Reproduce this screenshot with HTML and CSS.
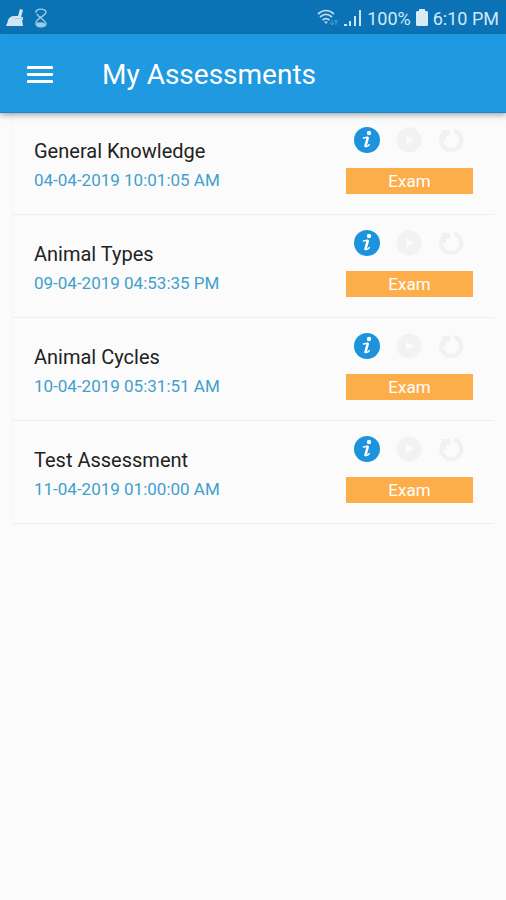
FILE: index.html
```
<!DOCTYPE html>
<html lang="en">
<head>
  <meta charset="UTF-8">
  <meta name="viewport" content="width=device-width, initial-scale=1.0">
  <title>My Assessments</title>
  <link rel="stylesheet" href="styles.css">
</head>
<body>
  <!-- shared icons -->
  <svg class="sprite" aria-hidden="true">
    <symbol id="icon-info" viewBox="0 0 26 26">
      <circle cx="13" cy="13" r="13" fill="#1c93dc"/>
      <circle cx="15" cy="6" r="2.200" fill="#fff"/>
      <path d="M9.500 11l4-.8M11.500 19.500c1.500.2 2.700-.5 3.700-1.800" fill="none" stroke="#fff" stroke-width="1.500" stroke-linecap="round"/>
      <path d="M13.700 11l-2.200 8" fill="none" stroke="#fff" stroke-width="2.600" stroke-linecap="round"/>
    </symbol>
    <symbol id="icon-play" viewBox="0 0 26 26">
      <circle cx="13" cy="13" r="12.500" fill="#f2f2f2"/>
      <path d="M10 8.500l8 4.500-8 4.500z" fill="#fbfbfb"/>
    </symbol>
    <symbol id="icon-reset" viewBox="0 0 26 26">
      <path d="M8 4.500a10 10 0 1 0 8-1" fill="none" stroke="#f1f1f1" stroke-width="4"/>
      <path d="M4 3h8v6H8v4H4z" fill="#f1f1f1"/>
    </symbol>
  </svg>

  <div class="status-bar">
    <div class="status-left">
      <svg width="18" height="18" viewBox="0 0 18 18"><path d="M0 17c0-2 2-3 2-6 1-2 3-4 6-4h4l2-7 3 1-2 7h2v3h-1l1 6z" fill="#cfe6f4"/><path d="M8 9.500h9" stroke="#a5cde6" fill="none"/></svg>
      <svg width="14" height="20" viewBox="0 0 14 20"><path d="M2 5c-1-5 10-5 10-1 0 4-10 6-10 11 0 5 10 5 10 1 0-4-8-7-9-10" fill="none" stroke="#9fcbe6" stroke-width="1.400"/><ellipse cx="6.500" cy="16.500" rx="4.500" ry="2.200" fill="#9fcbe6"/></svg>
    </div>
    <div class="status-right">
      <svg width="22" height="18" viewBox="0 0 22 18"><path d="M1 5c5-4.500 11-4.500 16 0M3 8c4-3.500 8-3.500 12 0M5.500 11c2.500-2 4.500-2 7 0" fill="none" stroke="#bcdcf0" stroke-width="1.700"/><path d="M9 15l-2-2.500h4z" fill="#bcdcf0"/><path d="M15 11v5M13 14l2 2 2-2M19 16v-5M17.500 13l1.500-2 1.500 2" fill="none" stroke="#4b9fd0"/></svg>
      <svg width="18" height="18" viewBox="0 0 18 18" fill="#cfe6f4"><path d="M0 15h3v2H0zM5 12h2v5H5zM10 7h2v10h-2zM15 1h2v16h-2z"/></svg>
      <span>100%</span>
      <svg width="12" height="18" viewBox="0 0 12 18"><path d="M3 0h6v2h2l1 1v13l-1 1H1l-1-1V3l1-1h2z" fill="#d8ebf7"/></svg>
      <span>6:10 PM</span>
    </div>
  </div>

  <header class="app-bar">
    <button class="menu-btn" aria-label="Menu"><span></span><span></span><span></span></button>
    <h1>My Assessments</h1>
  </header>

  <main class="list">
    <div class="item">
      <div class="info">
        <h2>General Knowledge</h2>
        <p>04-04-2019 10:01:05 AM</p>
      </div>
      <div class="actions">
        <div class="icons">
          <button aria-label="Info"><svg><use href="#icon-info"/></svg></button>
          <button aria-label="Start" disabled><svg><use href="#icon-play"/></svg></button>
          <button aria-label="Retake" disabled><svg><use href="#icon-reset"/></svg></button>
        </div>
        <span class="tag">Exam</span>
      </div>
    </div>

    <div class="item">
      <div class="info">
        <h2>Animal Types</h2>
        <p>09-04-2019 04:53:35 PM</p>
      </div>
      <div class="actions">
        <div class="icons">
          <button aria-label="Info"><svg><use href="#icon-info"/></svg></button>
          <button aria-label="Start" disabled><svg><use href="#icon-play"/></svg></button>
          <button aria-label="Retake" disabled><svg><use href="#icon-reset"/></svg></button>
        </div>
        <span class="tag">Exam</span>
      </div>
    </div>

    <div class="item">
      <div class="info">
        <h2>Animal Cycles</h2>
        <p>10-04-2019 05:31:51 AM</p>
      </div>
      <div class="actions">
        <div class="icons">
          <button aria-label="Info"><svg><use href="#icon-info"/></svg></button>
          <button aria-label="Start" disabled><svg><use href="#icon-play"/></svg></button>
          <button aria-label="Retake" disabled><svg><use href="#icon-reset"/></svg></button>
        </div>
        <span class="tag">Exam</span>
      </div>
    </div>

    <div class="item">
      <div class="info">
        <h2>Test Assessment</h2>
        <p>11-04-2019 01:00:00 AM</p>
      </div>
      <div class="actions">
        <div class="icons">
          <button aria-label="Info"><svg><use href="#icon-info"/></svg></button>
          <button aria-label="Start" disabled><svg><use href="#icon-play"/></svg></button>
          <button aria-label="Retake" disabled><svg><use href="#icon-reset"/></svg></button>
        </div>
        <span class="tag">Exam</span>
      </div>
    </div>
  </main>
</body>
</html>
```
FILE: styles.css
```
:root {
  --primary: #1f99e0;
  --primary-dark: #0b73b5;
  --accent: #fdae4b;
  --bg: #fbfbfb;
}
* { box-sizing: border-box; }
body {
  margin: 0;
  min-height: 100vh;
  background: var(--bg);
  font-family: Roboto, sans-serif;
}
h1, h2, p { margin: 0; font-weight: 400; }
button { border: none; background: none; padding: 0; cursor: pointer; }
svg { display: block; }
.sprite { display: none; }

.status-bar {
  display: flex;
  justify-content: space-between;
  align-items: center;
  height: 34px;
  padding: 2px 7px 0 6px;
  background: var(--primary-dark);
  color: #d3e8f5;
  font-size: 18px;
}
.status-left { display: flex; align-items: center; gap: 10px; }
.status-right { display: flex; align-items: center; gap: 5px; }

.app-bar {
  position: relative;
  display: flex;
  align-items: center;
  gap: 49px;
  height: 78px;
  padding: 2px 27px 0;
  background: var(--primary);
  color: #fff;
  box-shadow: 0 1px 0 #1688cb, 0 3px 6px rgba(0,0,0,0.35);
}
.app-bar h1 { padding-top: 2px; font-size: 28px; line-height: 32px; }
.menu-btn { display: flex; flex-direction: column; gap: 4px; width: 26px; }
.menu-btn span { height: 3px; background: #fff; border-radius: 1px; }

.list { margin: 0 12px; border-left: 1px solid #f5f5f5; }
.item {
  display: flex;
  justify-content: space-between;
  height: 103px;
  padding: 15px 21px 0;
  border-bottom: 1px solid #eee;
}
.info { padding-top: 11px; }
.info h2 { font-size: 20px; line-height: 26px; color: #222; }
.info p { margin-top: 4px; font-size: 17px; line-height: 24px; color: #419fce; }
.actions { width: 127px; }
.icons { display: flex; gap: 16px; padding-left: 8px; }
.icons svg { width: 26px; height: 26px; }
.tag {
  display: block;
  margin-top: 15px;
  background: var(--accent);
  color: #fff;
  font-size: 17px;
  line-height: 26px;
  text-align: center;
}
```
